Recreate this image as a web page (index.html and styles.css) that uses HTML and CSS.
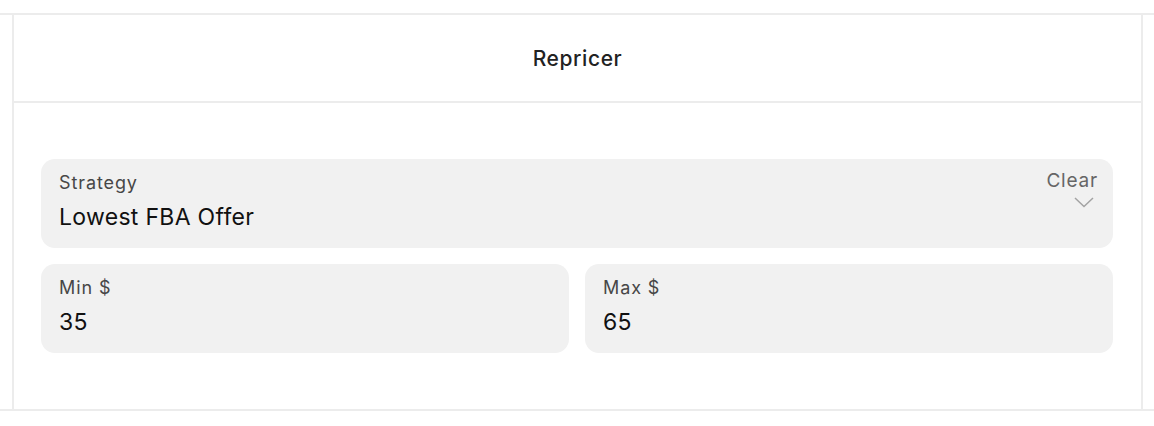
FILE: index.html
```html
<!DOCTYPE html>
<html lang="en">
<head>
    <meta charset="UTF-8">
    <meta name="viewport" content="width=device-width, initial-scale=1.0">
    <title>Repricer</title>
    <link rel="stylesheet" href="styles.css">
</head>
<body>
    <div class="panel">
        <div class="panel-inner">
            <div class="panel-header">Repricer</div>
            <div class="panel-body">
                <div class="field field-select">
                    <div class="field-text">
                        <div class="field-label">Strategy</div>
                        <div class="field-value">Lowest FBA Offer</div>
                    </div>
                    <div class="field-actions">
                        <span class="clear">Clear</span>
                        <svg class="chevron" width="20" height="11" viewBox="0 0 20 11">
                            <path d="M1 1 L10 9.5 L19 1" fill="none" stroke="#a3a3a3" stroke-width="1.5"/>
                        </svg>
                    </div>
                </div>
                <div class="row">
                    <div class="field">
                        <div class="field-label">Min $</div>
                        <div class="field-value">35</div>
                    </div>
                    <div class="field">
                        <div class="field-label">Max $</div>
                        <div class="field-value">65</div>
                    </div>
                </div>
            </div>
        </div>
    </div>
</body>
</html>
```

FILE: styles.css
```css
body { margin: 0; background-color: #fff; font-family: Inter, "Noto Sans", sans-serif; }
.panel { margin-top: 13px; border-top: 2px solid #ececec; border-bottom: 2px solid #ececec; }
.panel-inner { margin: 0 11px 0 12px; border-left: 2px solid #ececec; border-right: 2px solid #ececec; }
.panel-header { height: 85px; padding-top: 1px; border-bottom: 2px solid #ececec; display: flex; align-items: center; justify-content: center; font-size: 21px; letter-spacing: 0.6px; font-weight: 500; color: #222; }
.panel-body { padding: 56px 28px 56px 27px; }
.field { background-color: #f1f1f1; border-radius: 14px; height: 89px; box-sizing: border-box; padding: 12px 18px 0 18px; }
.field-select { display: flex; justify-content: space-between; padding-right: 15px; padding-top: 11px; }
.field-label { font-size: 18px; line-height: 24px; letter-spacing: 0.9px; color: #474747; }
.field-value { font-size: 23px; line-height: 30px; letter-spacing: 0.3px; margin-top: 7px; color: #111; }
.field-select .field-label { margin-top: 1px; }
.field-actions { display: flex; flex-direction: column; align-items: flex-end; }
.clear { font-size: 19px; line-height: 19px; letter-spacing: 0.8px; color: #666; margin-top: 1px; }
.chevron { display: block; margin: 7px 4px 0 0; }
.row { display: flex; gap: 16px; margin-top: 16px; }
.row .field { flex: 1; }
```
